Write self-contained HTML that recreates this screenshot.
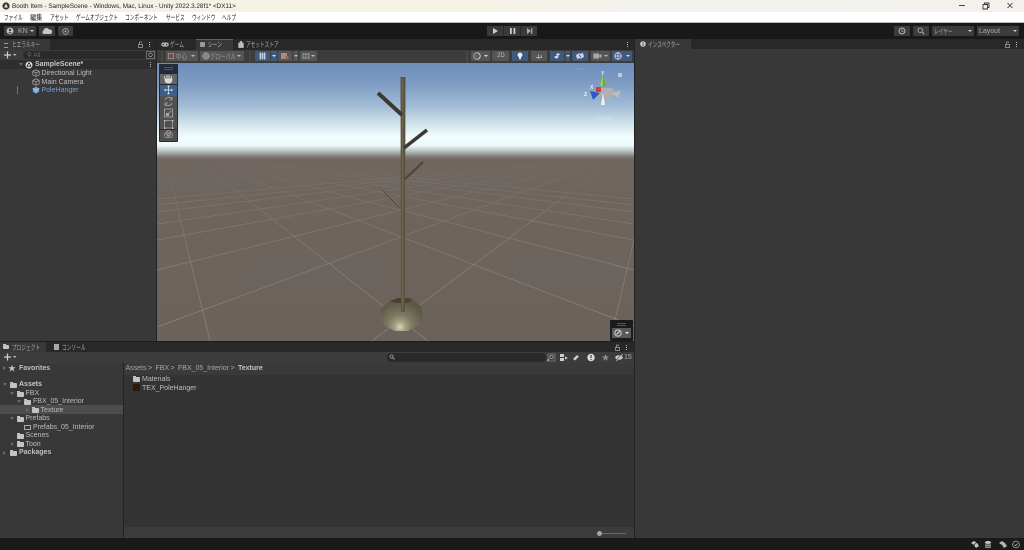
<!DOCTYPE html>
<html lang="ja"><head><meta charset="utf-8"><title>Unity</title>
<style>
html,body{margin:0;padding:0;width:1024px;height:550px;overflow:hidden;background:#383838}
body{position:relative;font-family:"Liberation Sans","Noto Sans CJK JP",sans-serif;font-size:7px;color:#bdbdbd;filter:blur(.3px)}
.b,.t,svg.i{position:absolute}
.t{white-space:nowrap;line-height:9px}
.jp{font-size:7.2px!important;transform:scaleX(.65);transform-origin:0 50%}
.btn{background:#3c3c3c;border-radius:1px}
.on{background:#3f5a7d}
.gb{background:#555;border-radius:1px}
.s{font-weight:bold}
.m{color:#222;font-size:6.5px}
.fold{position:absolute;width:7px;height:5px;background:#c4c4c4;border-radius:1px}
.fold:before{content:"";position:absolute;left:0;top:-1px;width:3px;height:1px;background:#c4c4c4}
.arr{position:absolute;width:0;height:0;border-left:2px solid transparent;border-right:2px solid transparent;border-top:2px solid #bbb}
.rar{position:absolute;width:0;height:0;border-top:2px solid transparent;border-bottom:2px solid transparent;border-left:3px solid #6a6a6a}
.dar{position:absolute;width:0;height:0;border-left:2.5px solid transparent;border-right:2.5px solid transparent;border-top:3px solid #6a6a6a}
</style></head><body>

<!-- title + menu -->
<div class="b" style="left:0;top:0;width:1024px;height:12px;background:linear-gradient(90deg,#f3f1e6 0%,#f7f2e6 45%,#f2f1ec 65%,#f4f1ed 100%)"></div>
<div class="b" style="left:0;top:12px;width:1024px;height:10px;background:#fff"></div>
<div class="b" style="left:0;top:22px;width:1024px;height:1px;background:#bbb"></div>
<svg class="i" style="left:2px;top:2px" width="8" height="8" viewBox="0 0 8 8"><circle cx="4" cy="4" r="3.600" fill="#333"/><path d="M4 1.500L6 5.500H2Z" fill="#ddd"/></svg>
<div class="t" style="left:12px;top:1.500px;color:#222;font-size:6.35px">Booth Item - SampleScene - Windows, Mac, Linux - Unity 2022.3.28f1* &lt;DX11&gt;</div>
<div class="t m jp" style="left:4px;top:12.500px">ファイル</div>
<div class="t m jp" style="left:30px;top:12.500px;transform:scaleX(.85)">編集</div>
<div class="t m jp" style="left:50px;top:12.500px">アセット</div>
<div class="t m jp" style="left:76px;top:12.500px">ゲームオブジェクト</div>
<div class="t m jp" style="left:125px;top:12.500px">コンポーネント</div>
<div class="t m jp" style="left:166px;top:12.500px">サービス</div>
<div class="t m jp" style="left:192px;top:12.500px">ウィンドウ</div>
<div class="t m jp" style="left:222px;top:12.500px">ヘルプ</div>
<svg class="i" style="left:955px;top:1px" width="69" height="10" viewBox="0 0 69 10"><path d="M4 4.500H10" stroke="#444" fill="none"/><path d="M28 3.500h4.500v4.500h-4.500zM29.500 3.500V2h4.500v4.500h-1.500" stroke="#333" fill="none" stroke-width=".9"/><path d="M52.500 2l5 5M57.500 2l-5 5" stroke="#333" fill="none" stroke-width=".8"/></svg>

<!-- toolbar -->
<div class="b" style="left:0;top:23px;width:1024px;height:16px;background:#191919"></div>
<div class="b btn" style="left:4px;top:26px;width:32px;height:10px"></div>
<svg class="i" style="left:6px;top:27px" width="8" height="8" viewBox="0 0 8 8"><circle cx="4" cy="4" r="3.400" fill="#c4c4c4"/><circle cx="4" cy="3" r="1.200" fill="#3c3c3c"/><path d="M2 6.200c.5-1.500 3.500-1.500 4 0" fill="#3c3c3c"/></svg>
<div class="t" style="left:18px;top:26.500px;color:#aaa">KN</div>
<div class="arr" style="left:30px;top:30px;border-top-color:#ccc"></div>
<div class="b btn" style="left:39px;top:26px;width:16px;height:10px"></div>
<svg class="i" style="left:41px;top:27px" width="12" height="8" viewBox="0 0 12 8"><path d="M2.500 7a2 2 0 0 1 0-3.500A3 3 0 0 1 8 2.500 2.300 2.300 0 0 1 9.500 7Z" fill="#c8c8c8"/></svg>
<div class="b btn" style="left:58px;top:26px;width:15px;height:10px"></div>
<svg class="i" style="left:62px;top:28px" width="7" height="7" viewBox="0 0 7 7"><circle cx="3.500" cy="3.500" r="2.800" fill="none" stroke="#aaa" stroke-width=".8"/><circle cx="3.500" cy="3.500" r="1" fill="#aaa"/></svg>

<div class="b" style="left:487px;top:26px;width:50px;height:10px;background:#3a3a3a"></div>
<div class="b" style="left:503px;top:26px;width:1px;height:10px;background:#2a2a2a"></div>
<div class="b" style="left:520px;top:26px;width:1px;height:10px;background:#2a2a2a"></div>
<svg class="i" style="left:487px;top:26px" width="50" height="10" viewBox="0 0 50 10"><path d="M6 2L11 5 6 8Z" fill="#ccc"/><rect x="23" y="2" width="1.800" height="6" fill="#ccc"/><rect x="26.500" y="2" width="1.800" height="6" fill="#ccc"/><path d="M40 2L44 5 40 8ZM44.200 2h1.200v6h-1.200z" fill="#aaa"/></svg>

<div class="b btn" style="left:894px;top:26px;width:16px;height:10px"></div>
<svg class="i" style="left:898px;top:27px" width="8" height="8" viewBox="0 0 8 8"><circle cx="4" cy="4" r="2.900" fill="none" stroke="#bbb"/><path d="M4 2.500V4.200L5.300 5" fill="none" stroke="#bbb" stroke-width=".7"/></svg>
<div class="b btn" style="left:913px;top:26px;width:16px;height:10px"></div>
<svg class="i" style="left:917px;top:27px" width="8" height="8" viewBox="0 0 8 8"><circle cx="3.200" cy="3.200" r="2.200" fill="none" stroke="#bbb" stroke-width=".8"/><path d="M5 5l2.300 2.300" stroke="#bbb"/></svg>
<div class="b btn" style="left:932px;top:26px;width:42px;height:10px"></div>
<div class="t jp" style="left:934px;top:26.500px;color:#a8a8a8">レイヤー</div>
<div class="arr" style="left:968px;top:30px;border-top-color:#ccc"></div>
<div class="b btn" style="left:977px;top:26px;width:42px;height:10px"></div>
<div class="t" style="left:979px;top:26.500px;color:#a8a8a8">Layout</div>
<div class="arr" style="left:1013px;top:30px;border-top-color:#ccc"></div>

<!-- Hierarchy -->
<div class="b" style="left:0;top:39px;width:156px;height:11px;background:#282828"></div>
<div class="b" style="left:0;top:39px;width:50px;height:11px;background:#383838"></div>
<div class="b" style="left:4px;top:43px;width:4px;height:3px;border-top:1px solid #999;border-bottom:1px solid #999"></div>
<div class="t jp" style="left:12px;top:40px;color:#a8a8a8">ヒエラルキー</div>
<svg class="i" style="left:137px;top:41px" width="16" height="7" viewBox="0 0 16 7"><path d="M1.500 3.500h4v3h-4zM2.300 3.500V2a1.200 1.200 0 0 1 2.400 0" fill="none" stroke="#aaa" stroke-width=".7"/><rect x="12" y="1" width="1" height="1" fill="#bbb"/><rect x="12" y="3" width="1" height="1" fill="#bbb"/><rect x="12" y="5" width="1" height="1" fill="#bbb"/></svg>
<div class="b" style="left:0;top:50px;width:156px;height:10px;background:#3c3c3c"></div>
<svg class="i" style="left:3px;top:51px" width="14" height="8" viewBox="0 0 14 8"><path d="M1 4h7M4.500 .5v7" stroke="#d0d0d0" stroke-width="1.200"/><path d="M10 3h3.500L11.700 5Z" fill="#bbb"/></svg>
<div class="b" style="left:23px;top:51px;width:132px;height:8px;background:#2a2a2a;border-radius:4px"></div>
<div class="t" style="left:27px;top:50.500px;color:#6a6a6a;font-size:6.500px">⚲ All</div>
<svg class="i" style="left:146px;top:51px" width="9" height="8" viewBox="0 0 9 8"><rect x=".5" y=".5" width="8" height="7" fill="none" stroke="#888" stroke-width=".7"/><circle cx="4.500" cy="3.800" r="1.800" fill="none" stroke="#aaa" stroke-width=".7"/></svg>
<div class="b" style="left:0;top:60px;width:156px;height:9px;background:#2e2e2e"></div>
<div class="dar" style="left:19px;top:63px"></div>
<svg class="i" style="left:25px;top:60.500px" width="8" height="8" viewBox="0 0 8 8"><circle cx="4" cy="4" r="3.500" fill="#ddd"/><path d="M4 .8L6.600 5.600H1.400Z" fill="#222"/><circle cx="4" cy="4" r="1" fill="#ddd"/></svg>
<div class="t s" style="left:35px;top:60px;color:#c8c8c8">SampleScene*</div>
<div class="b" style="left:149.500px;top:62px;width:1px;height:1px;background:#bbb;box-shadow:0 2px #bbb,0 4px #bbb"></div>
<svg class="i" style="left:32px;top:69px" width="8" height="8" viewBox="0 0 8 8"><path d="M4 .8L7.200 2.400V5.800L4 7.400.8 5.800V2.400ZM.8 2.400L4 4 7.200 2.400M4 4V7.400" fill="none" stroke="#aaa" stroke-width=".7"/></svg>
<div class="t" style="left:41.500px;top:69px">Directional Light</div>
<svg class="i" style="left:32px;top:77.500px" width="8" height="8" viewBox="0 0 8 8"><path d="M4 .8L7.200 2.400V5.800L4 7.400.8 5.800V2.400ZM.8 2.400L4 4 7.200 2.400M4 4V7.400" fill="none" stroke="#aaa" stroke-width=".7"/></svg>
<div class="t" style="left:41.500px;top:77.500px">Main Camera</div>
<svg class="i" style="left:32px;top:86px" width="8" height="8" viewBox="0 0 8 8"><path d="M4 .8L7.200 2.400V5.800L4 7.400.8 5.800V2.400Z" fill="#6fa3d8"/><path d="M.8 2.400L4 4 7.200 2.400M4 4V7.400" fill="none" stroke="#cfe2f5" stroke-width=".6"/></svg>
<div class="t" style="left:41.500px;top:86px;color:#6f9fd6">PoleHanger</div>
<div class="b" style="left:17px;top:86px;width:1px;height:8px;background:#3f7fb5"></div>
<div class="b" style="left:156px;top:39px;width:1px;height:303px;background:#222"></div>

<!-- Scene tabs -->
<div class="b" style="left:157px;top:39px;width:478px;height:11px;background:#282828"></div>
<div class="b" style="left:196px;top:39px;width:37px;height:11px;background:#383838;border-top:1px solid #3b6a94;box-sizing:border-box"></div>
<svg class="i" style="left:161px;top:42px" width="8" height="5" viewBox="0 0 8 5"><rect x=".3" y=".5" width="7.400" height="4" rx="2" fill="#bbb"/><circle cx="2.300" cy="2.500" r=".8" fill="#333"/><circle cx="5.700" cy="2.500" r=".8" fill="#333"/></svg>
<div class="t jp" style="left:170px;top:40px;color:#a8a8a8">ゲーム</div>
<div class="b" style="left:200px;top:42px;width:5px;height:5px;background:#999;border-radius:1px"></div>
<div class="t jp" style="left:208px;top:40px;color:#b8b8b8">シーン</div>
<svg class="i" style="left:238px;top:41px" width="6" height="7" viewBox="0 0 6 7"><path d="M.5 2h5v4.700h-5zM1.800 2V1.200a1.200 1.200 0 0 1 2.400 0V2" fill="#bbb" stroke="#bbb" stroke-width=".4"/></svg>
<div class="t jp" style="left:246px;top:40px;color:#a8a8a8">アセットストア</div>
<div class="b" style="left:627px;top:42px;width:1px;height:1px;background:#bbb;box-shadow:0 2px #bbb,0 4px #bbb"></div>

<!-- Scene toolbar -->
<div class="b" style="left:157px;top:50px;width:477px;height:13px;background:#3c3c3c"></div>
<div class="b" style="left:161px;top:51px;width:2px;height:11px;background:#474747"></div>
<div class="b gb" style="left:166px;top:51px;width:32px;height:10px"></div>
<div class="b" style="left:168px;top:53px;width:6px;height:6px;border:1px solid #888;box-sizing:border-box;background:#7a4a3c"></div>
<div class="t jp" style="left:176px;top:51.500px;color:#999;transform:scaleX(.77)">中心</div>
<div class="arr" style="left:191px;top:55px"></div>
<div class="b gb" style="left:200px;top:51px;width:44px;height:10px"></div>
<svg class="i" style="left:202px;top:52px" width="8" height="8" viewBox="0 0 8 8"><circle cx="4" cy="4" r="3.200" fill="#777" stroke="#aaa" stroke-width=".7"/><path d="M1 4h6M4 1v6" stroke="#aaa" stroke-width=".5"/></svg>
<div class="t jp" style="left:210px;top:51.500px;color:#999;transform:scaleX(.72)">グローバル</div>
<div class="arr" style="left:237px;top:55px"></div>
<div class="b" style="left:249px;top:51px;width:2px;height:11px;background:#474747"></div>
<div class="b on" style="left:255px;top:51px;width:15px;height:10px"></div>
<div class="b on" style="left:271px;top:51px;width:6px;height:10px"></div>
<svg class="i" style="left:258px;top:52px" width="9" height="8" viewBox="0 0 9 8"><path d="M2.500 .5V7.500M4.500 .5V7.500M6.500 .5V7.500M1 2h7M1 4h7M1 6h7" stroke="#dde" stroke-width=".8"/></svg>
<div class="arr" style="left:272px;top:55px;border-top-color:#ddd"></div>
<div class="b gb" style="left:278px;top:51px;width:14px;height:10px"></div>
<div class="b gb" style="left:293px;top:51px;width:5px;height:10px"></div>
<svg class="i" style="left:280px;top:52px" width="10" height="8" viewBox="0 0 10 8"><path d="M2 1V7M4 1V7M6 1V7M1 2h6M1 4h6M1 6h6" stroke="#bbb" stroke-width=".8"/><circle cx="7" cy="5.500" r="1.700" fill="#d0553a"/></svg>
<div class="arr" style="left:293.500px;top:55px"></div>
<div class="b gb" style="left:300px;top:51px;width:17px;height:10px"></div>
<svg class="i" style="left:302px;top:52px" width="8" height="8" viewBox="0 0 8 8"><path d="M1 1V7M7 1V7M1 2h6M1 6h6M4 2v4" stroke="#999" stroke-width=".9"/></svg>
<div class="arr" style="left:311px;top:55px"></div>

<div class="b" style="left:466px;top:51px;width:2px;height:11px;background:#474747"></div>
<div class="b gb" style="left:471px;top:51px;width:19px;height:10px"></div>
<svg class="i" style="left:473px;top:52px" width="8" height="8" viewBox="0 0 8 8"><circle cx="4" cy="4" r="3.200" fill="none" stroke="#ddd" stroke-width=".9"/><path d="M4 .8a3.200 3.200 0 0 0 0 6.400Z" fill="#666"/></svg>
<div class="arr" style="left:484px;top:55px;border-top-color:#ddd"></div>
<div class="b gb" style="left:492px;top:51px;width:17px;height:10px"></div>
<div class="t" style="left:497px;top:51.500px;font-size:6px;color:#bbb">2D</div>
<div class="b on" style="left:512px;top:51px;width:16px;height:10px"></div>
<svg class="i" style="left:516px;top:52px" width="8" height="8" viewBox="0 0 8 8"><circle cx="4" cy="3" r="2.400" fill="#eee"/><rect x="3" y="5.200" width="2" height="2" fill="#eee"/></svg>
<div class="b gb" style="left:531px;top:51px;width:16px;height:10px"></div>
<svg class="i" style="left:535px;top:52px" width="8" height="8" viewBox="0 0 8 8"><path d="M1 5.500h6M3.500 2.500V7" stroke="#aaa" stroke-width="1"/><path d="M5 3.500h2v2" fill="#aaa"/></svg>
<div class="b on" style="left:550px;top:51px;width:14px;height:10px"></div>
<div class="b on" style="left:565px;top:51px;width:5px;height:10px"></div>
<svg class="i" style="left:553px;top:52px" width="8" height="8" viewBox="0 0 8 8"><path d="M1 5l2.500-1.500L6 5 3.500 6.800ZM3 2.500l2-1.500 2 1.500-2 1.500Z" fill="#dde"/></svg>
<div class="arr" style="left:565.500px;top:55px;border-top-color:#ddd"></div>
<div class="b on" style="left:572px;top:51px;width:16px;height:10px"></div>
<svg class="i" style="left:575px;top:52px" width="10" height="8" viewBox="0 0 10 8"><ellipse cx="5" cy="4" rx="4" ry="2.500" fill="#cdd6e0"/><circle cx="5" cy="4" r="1.300" fill="#3f5a7d"/><path d="M2 7L8 1" stroke="#e8edf2" stroke-width=".8"/></svg>
<div class="b gb" style="left:591px;top:51px;width:19px;height:10px"></div>
<svg class="i" style="left:593px;top:53px" width="9" height="6" viewBox="0 0 9 6"><rect x=".5" y=".5" width="5.500" height="5" fill="#aaa"/><path d="M6 2.500L8.500 1V5L6 3.500Z" fill="#aaa"/></svg>
<div class="arr" style="left:604px;top:55px"></div>
<div class="b on" style="left:612px;top:51px;width:20px;height:10px"></div>
<svg class="i" style="left:614px;top:52px" width="8" height="8" viewBox="0 0 8 8"><circle cx="4" cy="4" r="3.200" fill="none" stroke="#dde" stroke-width=".8"/><path d="M4 0V8M0 4H8" stroke="#dde" stroke-width=".8"/></svg>
<div class="arr" style="left:626px;top:55px;border-top-color:#ddd"></div>

<!-- Viewport -->
<svg class="i" style="left:157px;top:63px" width="477" height="278" viewBox="157 63 477 278">
<defs>
<linearGradient id="sky" x1="0" y1="63" x2="0" y2="160" gradientUnits="userSpaceOnUse">
<stop offset="0" stop-color="#6d8dbb"/><stop offset=".22" stop-color="#7f9dc4"/><stop offset=".45" stop-color="#a3bdd6"/><stop offset=".62" stop-color="#cfe2ea"/><stop offset=".76" stop-color="#f0fcfd"/><stop offset=".85" stop-color="#eef9fa"/><stop offset=".91" stop-color="#b4bfc0"/><stop offset=".97" stop-color="#7c7570"/><stop offset="1" stop-color="#6e655f"/>
</linearGradient>
<linearGradient id="gr" x1="0" y1="157" x2="0" y2="341" gradientUnits="userSpaceOnUse"><stop offset="0" stop-color="#6f6660"/><stop offset="1" stop-color="#6b625c"/></linearGradient>
<linearGradient id="fg" x1="0" y1="157" x2="0" y2="341" gradientUnits="userSpaceOnUse"><stop offset="0" stop-color="#000"/><stop offset=".08" stop-color="#333"/><stop offset=".3" stop-color="#888"/><stop offset=".6" stop-color="#ccc"/><stop offset="1" stop-color="#fff"/></linearGradient>
<mask id="fade" maskUnits="userSpaceOnUse" x="157" y="157" width="477" height="184"><rect x="157" y="157" width="477" height="184" fill="url(#fg)"/></mask>
<radialGradient id="base" cx="400" cy="327" r="26" gradientUnits="userSpaceOnUse"><stop offset="0" stop-color="#dcd8bc"/><stop offset=".2" stop-color="#a5a184"/><stop offset=".5" stop-color="#7b775f"/><stop offset="1" stop-color="#5c5846"/></radialGradient>
</defs>
<rect x="157" y="63" width="477" height="97" fill="url(#sky)"/>
<rect x="157" y="160" width="477" height="181" fill="url(#gr)"/>
<g mask="url(#fade)">
<g stroke="#8f8780" stroke-width=".7" fill="none">
<path d="M617 157L372 341M617 157L157 327M617 157L157 270M617 157L157 240M617 157L157 224M617 157L157 212M617 157L157 205M617 157L157 199"/>
<path d="M193 157L428 341M193 157L634 326M193 157L634 270M193 157L634 240M193 157L634 224M193 157L634 212M193 157L634 205M193 157L634 199"/>
<path d="M170 177L210 341M610 341L634 240"/>
</g>
</g>
<path d="M390 301L412 299 421 306 423 316 419 325 408 331 395 331 385 326 381 318 381 309Z" fill="url(#base)"/>
<path d="M390 301L398 298 408 298 412 299 408 303 396 303Z" fill="#46432f"/>
<path d="M400.500 77h5l-.5 235h-4z" fill="#5c5540"/>
<path d="M402.500 78V311" stroke="#6f6750" stroke-width="1"/>
<path d="M378 93L402 115" stroke="#3b3932" stroke-width="4"/>
<path d="M427 130L404 148" stroke="#3b3932" stroke-width="3.500"/>
<path d="M423 162L405 179" stroke="#4f4938" stroke-width="2.400"/>
<path d="M383 189L400 207" stroke="#4a4538" stroke-width="2.400"/>
<path d="M383 188.500L400 206.500" stroke="#8a8270" stroke-width="1"/>
<!-- gizmo -->
<rect x="577" y="68" width="8" height="2" fill="#8a9aae"/>
<rect x="618" y="73" width="4" height="4" fill="#c0cede" rx="1"/>
<path d="M600 86L606 86 603 74Z" fill="#8fd640"/>
<path d="M603 74L606 86H603Z" fill="#6aa82e"/>
<path d="M597 88L612 88 617 94 606 100 596 94Z" fill="#b0b0b0"/>
<path d="M590 91L600 93 593 100Z" fill="#2e58c8"/>
<path d="M596 87h5v5h-5z" fill="#d2402f"/>
<path d="M612 94L620 90 619 98Z" fill="#bdbdbd"/>
<path d="M601 105L605 105 603 93Z" fill="#f2f2f2"/>
<text x="601" y="75" font-size="5" fill="#eef" font-family="Liberation Sans,sans-serif" font-weight="bold">Y</text>
<text x="590" y="89" font-size="5" fill="#eef" font-family="Liberation Sans,sans-serif" font-weight="bold">X</text>
<text x="584" y="96" font-size="5" fill="#eef" font-family="Liberation Sans,sans-serif" font-weight="bold">Z</text>
<text x="592" y="120" font-size="6" fill="#d4e2ec" font-family="Liberation Sans,sans-serif">≺Persp</text>
</svg>

<!-- Tools overlay -->
<div class="b" style="left:159px;top:64px;width:19px;height:78px;background:#232b38;border-radius:1px"></div>
<div class="b" style="left:164px;top:67px;width:9px;height:1px;border-top:1px solid #555;border-bottom:1px solid #555"></div>
<div class="b" style="left:160px;top:73.500px;width:17px;height:10.500px;background:#646464"></div>
<div class="b" style="left:160px;top:85px;width:17px;height:10.500px;background:#3f5f88"></div>
<div class="b" style="left:160px;top:96px;width:17px;height:10.500px;background:#505050"></div>
<div class="b" style="left:160px;top:107px;width:17px;height:10.500px;background:#505050"></div>
<div class="b" style="left:160px;top:118px;width:17px;height:10.500px;background:#505050"></div>
<div class="b" style="left:160px;top:129.500px;width:17px;height:11px;background:#505050"></div>
<svg class="i" style="left:160px;top:73px" width="17" height="68" viewBox="0 0 17 68">
<path d="M5 6l-.5-3M7 5.500V2M9 5.500V2M11 6l.500-3M5 6c0 3 1 4 3.500 4s3.500-1 3.500-4Z" fill="#d8d8d8" stroke="#d8d8d8" stroke-width="1"/>
<path d="M8.500 12.500V21M4.500 17h8" stroke="#e8eef5" stroke-width=".7"/><path d="M8.500 12.500l-1.500 1.500h3zM8.500 21.500l-1.500-1.500h3zM4 17l1.500-1.500v3zM13 17l-1.500-1.500v3z" fill="#e8eef5"/>
<path d="M5 27a4 4 0 0 1 7-1M12 30a4 4 0 0 1-7 1" fill="none" stroke="#aaa" stroke-width=".9"/><path d="M12 24v3h-3M5 33v-3h3" fill="none" stroke="#aaa" stroke-width=".7"/>
<rect x="4.500" y="36" width="8" height="8" fill="none" stroke="#aaa" stroke-width=".8"/><rect x="6" y="40" width="3" height="3" fill="#aaa"/><path d="M8 41l3-3" stroke="#aaa" stroke-width=".7"/>
<rect x="4.500" y="47.500" width="8" height="7.500" fill="none" stroke="#bbb" stroke-width=".6"/><path d="M4 47h1.500v1.500H4zM12 47h1.500v1.500H12zM4 54.500h1.500V56H4zM12 54.500h1.500V56H12z" fill="#bbb"/>
<circle cx="7" cy="62" r="2.500" fill="none" stroke="#aaa" stroke-width=".7"/><circle cx="10" cy="62" r="2.500" fill="none" stroke="#aaa" stroke-width=".7"/><circle cx="8.500" cy="60" r="2.500" fill="none" stroke="#aaa" stroke-width=".7"/>
</svg>
<div class="b" style="left:610px;top:320px;width:23px;height:21px;background:#1b1b1b;border-radius:1px"></div>
<div class="b" style="left:617px;top:323px;width:9px;height:1px;border-top:1px solid #555;border-bottom:1px solid #555"></div>
<div class="b" style="left:612px;top:328px;width:19px;height:10px;background:#5a5a5a"></div>
<svg class="i" style="left:614px;top:329px" width="8" height="8" viewBox="0 0 8 8"><circle cx="4" cy="4" r="3.200" fill="none" stroke="#ddd" stroke-width=".9"/><path d="M2.500 5.500L6 2" stroke="#ddd"/></svg>
<div class="arr" style="left:625px;top:332px;border-top-color:#eee"></div>

<!-- Inspector -->
<div class="b" style="left:634px;top:39px;width:1px;height:499px;background:#232323"></div>
<div class="b" style="left:635px;top:39px;width:389px;height:10px;background:#282828"></div>
<div class="b" style="left:635px;top:39px;width:56px;height:10px;background:#383838"></div>
<svg class="i" style="left:640px;top:41px" width="6" height="6" viewBox="0 0 6 6"><circle cx="3" cy="3" r="2.800" fill="#ccc"/><rect x="2.600" y="2.500" width=".9" height="2.300" fill="#333"/><rect x="2.600" y="1.200" width=".9" height=".8" fill="#333"/></svg>
<div class="t jp" style="left:648px;top:40px;color:#a8a8a8">インスペクター</div>
<svg class="i" style="left:1004px;top:41px" width="16" height="7" viewBox="0 0 16 7"><path d="M1.500 3.500h4v3h-4zM2.300 3.500V2a1.200 1.200 0 0 1 2.400 0" fill="none" stroke="#aaa" stroke-width=".7"/><rect x="12" y="1" width="1" height="1" fill="#bbb"/><rect x="12" y="3" width="1" height="1" fill="#bbb"/><rect x="12" y="5" width="1" height="1" fill="#bbb"/></svg>

<!-- Project -->
<div class="b" style="left:0;top:341px;width:634px;height:1px;background:#1e1e1e"></div>
<div class="b" style="left:0;top:342px;width:634px;height:10px;background:#282828"></div>
<div class="b" style="left:0;top:342px;width:46px;height:10px;background:#383838"></div>
<div class="fold" style="left:3px;top:345px;width:6px;height:4px"></div>
<div class="t jp" style="left:12px;top:343px;color:#a8a8a8">プロジェクト</div>
<div class="b" style="left:54px;top:344px;width:5px;height:6px;background:#aaa"></div>
<div class="t jp" style="left:62px;top:343px;color:#a8a8a8">コンソール</div>
<svg class="i" style="left:614px;top:344px" width="16" height="7" viewBox="0 0 16 7"><path d="M1.500 3.500h4v3h-4zM2.300 3.500V2a1.200 1.200 0 0 1 2.400 0" fill="none" stroke="#aaa" stroke-width=".7"/><rect x="12" y="1" width="1" height="1" fill="#bbb"/><rect x="12" y="3" width="1" height="1" fill="#bbb"/><rect x="12" y="5" width="1" height="1" fill="#bbb"/></svg>
<div class="b" style="left:0;top:352px;width:634px;height:11px;background:#3c3c3c"></div>
<svg class="i" style="left:3px;top:353px" width="14" height="8" viewBox="0 0 14 8"><path d="M1 4h7M4.500 .5v7" stroke="#d0d0d0" stroke-width="1.200"/><path d="M10 3h3.500L11.700 5Z" fill="#bbb"/></svg>
<div class="b" style="left:387px;top:353px;width:159px;height:8.500px;background:#2a2a2a;border-radius:4px"></div>
<svg class="i" style="left:389px;top:354px" width="6" height="6" viewBox="0 0 6 6"><circle cx="2.500" cy="2.500" r="1.600" fill="none" stroke="#999" stroke-width=".8"/><path d="M3.700 3.700L5.500 5.500" stroke="#999"/></svg>
<svg class="i" style="left:547px;top:352px" width="87" height="11" viewBox="0 0 87 11">
<rect x="1" y="2" width="7" height="7" fill="none" stroke="#888" stroke-width=".7"/><circle cx="4.500" cy="5" r="1.700" fill="none" stroke="#bbb" stroke-width=".7"/><path d="M0 9l2-2" stroke="#bbb"/>
<path d="M13 2h4v3h-4zM13 6h4v3h-4zM18 4.500l3 1.500-3 1.500z" fill="#ccc"/>
<path d="M26 7l4-4 2 1.500-4 4Z" fill="#ccc"/>
<circle cx="44" cy="5.500" r="3.700" fill="#ddd"/><rect x="43.500" y="3" width="1.100" height="3" fill="#333"/><rect x="43.500" y="6.800" width="1.100" height="1.100" fill="#333"/>
<path d="M58.500 2l1 2.400 2.500.2-1.900 1.600.6 2.500-2.200-1.400-2.200 1.400.6-2.500L55 4.600l2.500-.2Z" fill="#8a8a8a"/>
<ellipse cx="72" cy="5.500" rx="3.800" ry="2.300" fill="#c8c8c8"/><path d="M69 9l6-7" stroke="#3c3c3c" stroke-width="1"/><path d="M69.500 9l6-7" stroke="#ccc" stroke-width=".7"/>
</svg>
<div class="t" style="left:624px;top:353px;color:#aaa">15</div>

<!-- Project left -->
<div class="b" style="left:0;top:363px;width:123px;height:175px;background:#383838"></div>
<div class="b" style="left:123px;top:363px;width:1px;height:175px;background:#232323"></div>
<div class="b" style="left:0;top:405px;width:123px;height:9px;background:#4d4d4d"></div>
<div class="rar" style="left:3px;top:366px"></div>
<div class="t" style="left:8px;top:363.500px;color:#c4c4c4;font-size:8px">★</div>
<div class="t s" style="left:19px;top:363.500px;color:#c0c0c0">Favorites</div>
<div class="dar" style="left:3px;top:383px"></div>
<div class="fold" style="left:10px;top:383px"></div>
<div class="t s" style="left:19px;top:380px;color:#c8c8c8">Assets</div>
<div class="dar" style="left:10px;top:392px"></div>
<div class="fold" style="left:17px;top:392px"></div>
<div class="t" style="left:25.500px;top:388.500px">FBX</div>
<div class="dar" style="left:17px;top:400px"></div>
<div class="fold" style="left:24px;top:400px"></div>
<div class="t" style="left:33px;top:397px">FBX_05_Interior</div>
<div class="rar" style="left:26px;top:408px"></div>
<div class="fold" style="left:32px;top:408px"></div>
<div class="t" style="left:40.500px;top:405.500px">Texture</div>
<div class="dar" style="left:10px;top:417px"></div>
<div class="fold" style="left:17px;top:417px"></div>
<div class="t" style="left:25.500px;top:414px">Prefabs</div>
<div class="b" style="left:24px;top:425px;width:7px;height:5px;border:1px solid #aaa;box-sizing:border-box"></div>
<div class="t" style="left:33px;top:422.500px">Prefabs_05_Interior</div>
<div class="fold" style="left:17px;top:434px"></div>
<div class="t" style="left:25.500px;top:431px">Scenes</div>
<div class="rar" style="left:11px;top:442px"></div>
<div class="fold" style="left:17px;top:442px"></div>
<div class="t" style="left:25.500px;top:439.500px">Toon</div>
<div class="rar" style="left:3px;top:451px"></div>
<div class="fold" style="left:10px;top:451px"></div>
<div class="t s" style="left:19px;top:448px;color:#c0c0c0">Packages</div>

<!-- Project right -->
<div class="b" style="left:124px;top:363px;width:510px;height:175px;background:#333"></div>
<div class="b" style="left:124px;top:363px;width:510px;height:11.500px;background:#3a3a3a"></div>
<div class="t" style="left:125.500px;top:364px;color:#a8a8a8">Assets</div>
<div class="t" style="left:148px;top:364px;color:#a8a8a8">&gt;</div>
<div class="t" style="left:155.500px;top:364px;color:#a8a8a8">FBX</div>
<div class="t" style="left:170.500px;top:364px;color:#a8a8a8">&gt;</div>
<div class="t" style="left:178px;top:364px;color:#a8a8a8">FBX_05_Interior</div>
<div class="t" style="left:230.500px;top:364px;color:#a8a8a8">&gt;</div>
<div class="t s" style="left:238px;top:364px;color:#c4c4c4">Texture</div>
<div class="fold" style="left:133px;top:377px"></div>
<div class="t" style="left:142px;top:375px">Materials</div>
<div class="b" style="left:133px;top:384px;width:7px;height:7px;background:#2a1c10"></div>
<div class="t" style="left:142px;top:383.500px">TEX_PoleHanger</div>
<div class="b" style="left:124px;top:527px;width:510px;height:11px;background:#3c3c3c"></div>
<div class="b" style="left:597px;top:532.500px;width:29px;height:1px;background:#6a6a6a"></div>
<div class="b" style="left:596.500px;top:530.500px;width:5px;height:5px;background:#a4a4a4;border-radius:50%"></div>

<!-- Status bar -->
<div class="b" style="left:0;top:538px;width:1024px;height:12px;background:#1a1a1a"></div>
<svg class="i" style="left:970px;top:540px" width="52" height="9" viewBox="0 0 52 9">
<path d="M1 3l3-2 3 2-3 2zM4 5l3-2 2 3-3 2z" fill="#c4c4c4"/><path d="M2 7l5-5" stroke="#1a1a1a" stroke-width=".6"/>
<ellipse cx="18" cy="2.500" rx="3.200" ry="1.500" fill="#c4c4c4"/><path d="M15 4.500h6v1.200h-6zM15 6.500h6v1.200h-6z" fill="#b0b0b0"/>
<path d="M29 3l3-2 3 2-3 2zM32 5l3-2 2 3-3 2z" fill="#b4b4b4"/>
<circle cx="46" cy="4.500" r="3.400" fill="none" stroke="#aaa" stroke-width=".8"/><path d="M44.500 4.500l1.200 1.200 2-2.200" fill="none" stroke="#ccc" stroke-width=".7"/>
</svg>
</body></html>
